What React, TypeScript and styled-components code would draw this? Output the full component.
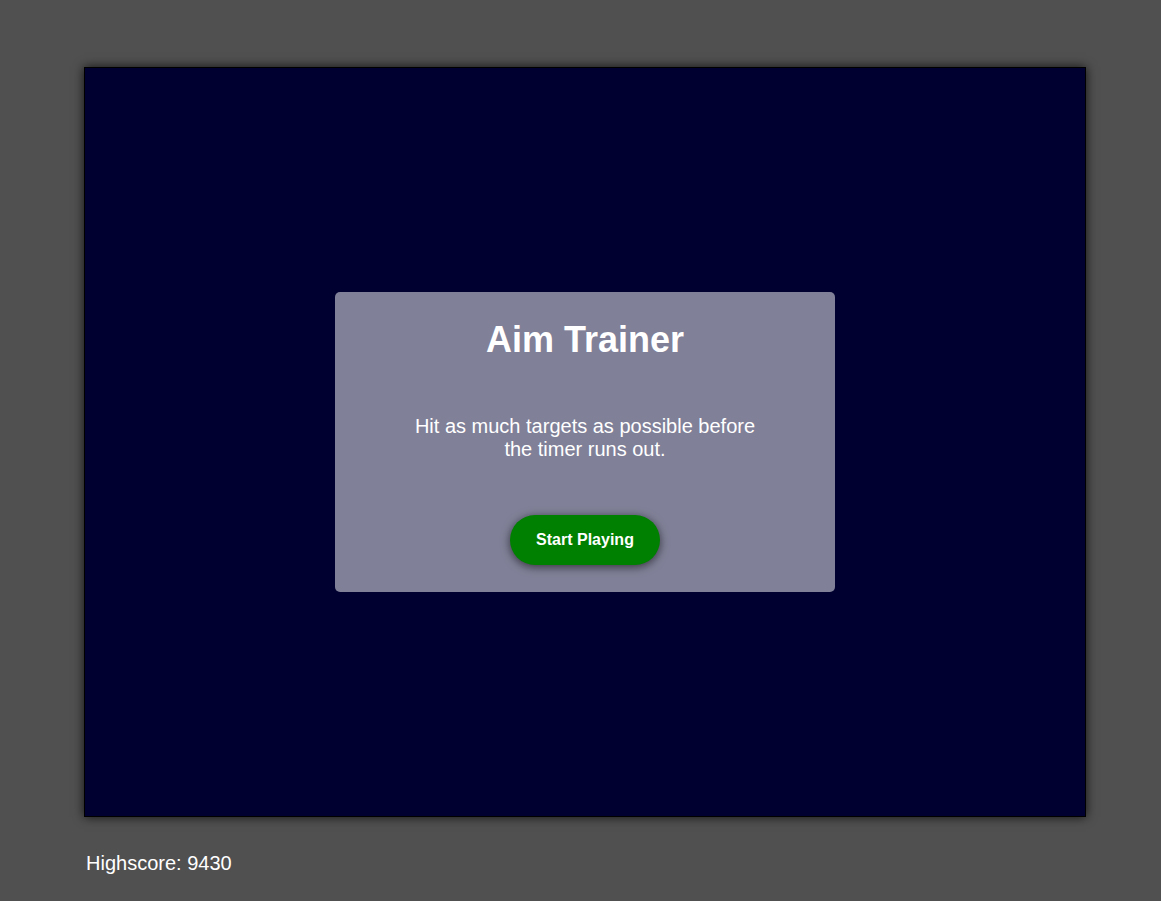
import React from "react";
import styled, { createGlobalStyle } from "styled-components";

const GlobalStyle = createGlobalStyle`
  html, body {
    margin: 0;
    padding: 0;
    background: #505050;
    font-family: "Liberation Sans", Arial, sans-serif;
    color: #ffffff;
  }
`;

const Page = styled.div`
  display: flex;
  flex-direction: column;
  align-items: flex-start;
  padding: 67px 0 0 84px;
  min-height: 901px;
  box-sizing: border-box;
`;

const Board = styled.div`
  width: 1000px;
  height: 748px;
  box-sizing: content-box;
  background: #000030;
  border: 1px solid #000000;
  box-shadow: 0 0 10px rgba(0, 0, 0, 0.8);
  display: flex;
  align-items: center;
  justify-content: center;
`;

const Card = styled.div`
  width: 500px;
  height: 300px;
  box-sizing: border-box;
  background: rgba(255, 255, 255, 0.5);
  border-radius: 5px;
  display: flex;
  flex-direction: column;
  align-items: center;
  justify-content: space-around;
`;

const Title = styled.h1`
  margin: 0;
  font-size: 36px;
  font-weight: bold;
  line-height: normal;
  color: #ffffff;
`;

const Description = styled.p`
  margin: 0;
  max-width: 350px;
  font-size: 20px;
  line-height: 23px;
  text-align: center;
  color: #ffffff;
`;

const StartButton = styled.button`
  width: 150px;
  height: 50px;
  border: none;
  border-radius: 25px;
  background: #008000;
  color: #ffffff;
  font-family: "Liberation Sans", Arial, sans-serif;
  font-size: 16px;
  font-weight: bold;
  box-shadow: 0 2px 10px rgba(0, 0, 0, 0.6);
  cursor: pointer;
`;

const Highscore = styled.div`
  margin: 35px 0 0 2px;
  font-size: 20px;
  line-height: 23px;
  color: #ffffff;
`;

export default function App() {
  return (
    <>
      <GlobalStyle />
      <Page>
        <Board>
          <Card>
            <Title>Aim Trainer</Title>
            <Description>
              Hit as much targets as possible before the timer runs out.
            </Description>
            <StartButton>Start Playing</StartButton>
          </Card>
        </Board>
        <Highscore>Highscore: 9430</Highscore>
      </Page>
    </>
  );
}
